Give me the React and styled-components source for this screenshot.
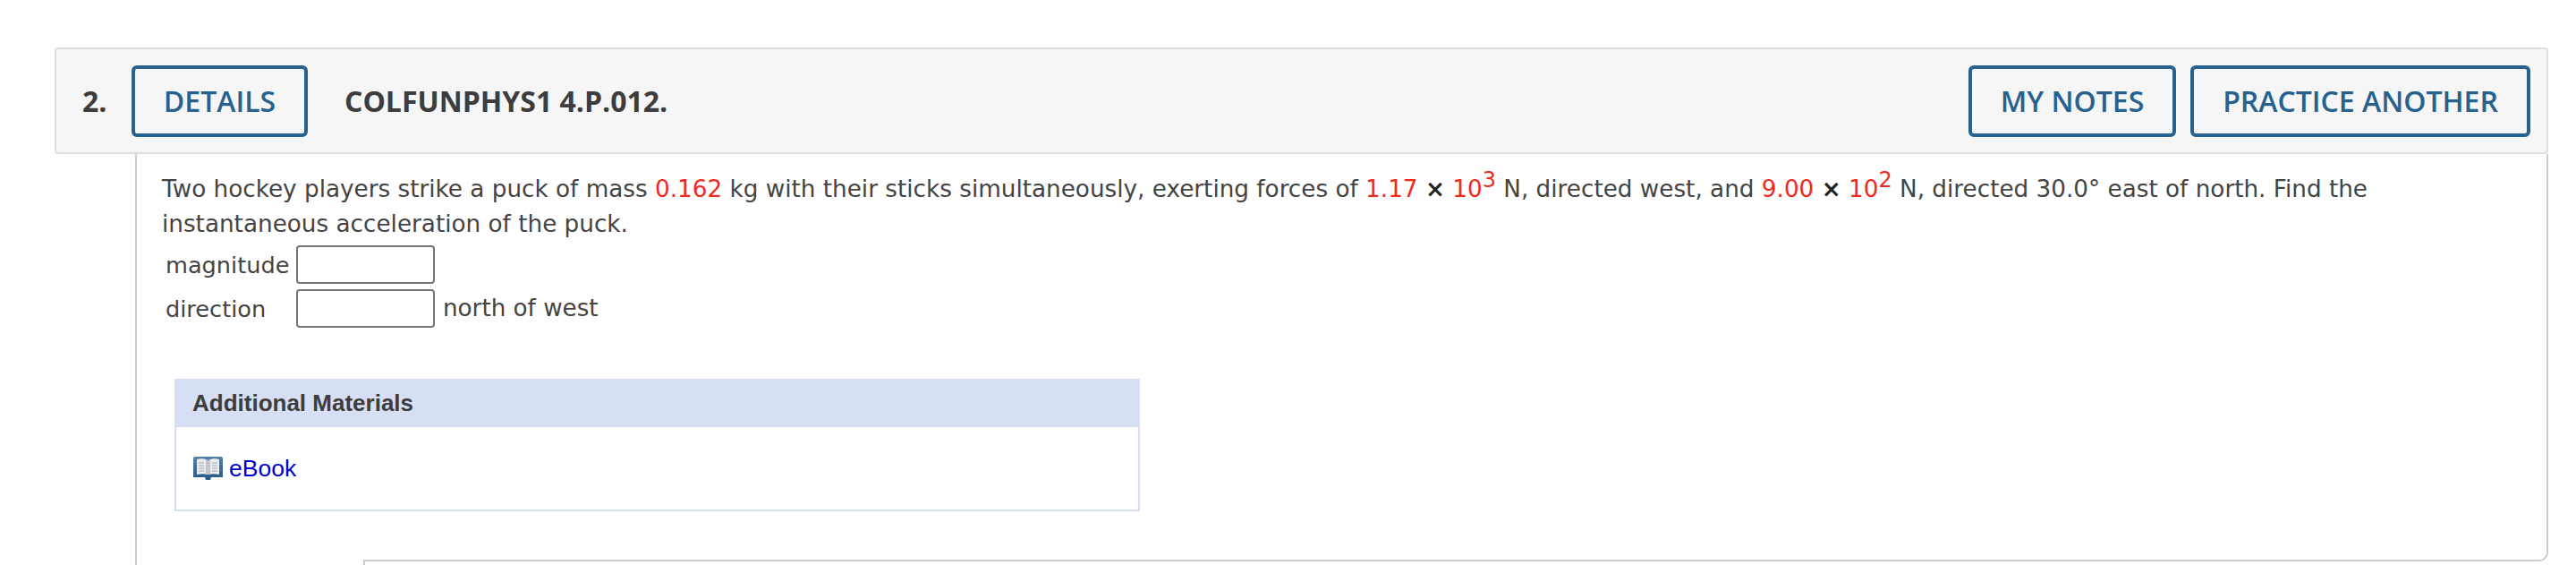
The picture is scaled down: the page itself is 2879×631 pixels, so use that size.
import styled, { createGlobalStyle } from "styled-components";

const GlobalStyle = createGlobalStyle`
html, body {
    margin: 0;
    background: #fff;
    height: 100%;
}
* {
    box-sizing: border-box;
}
`
const Page = styled.div`
width: 2879px;
height: 631px;
overflow: hidden;
padding: 53px 31px 0 61px;
`
const Header = styled.div`
display: flex;
align-items: center;
height: 119px;
padding: 0 18px 0 29px;
background: #f6f6f6;
border: 2px solid #dedede;
border-radius: 4px;
`
const Number = styled.span`
font-family: "Open Sans", sans-serif;
font-weight: 700;
font-size: 32px;
color: #3d3d3d;
width: 55px;
`
const Title = styled.span`
font-family: "Open Sans", sans-serif;
font-weight: 700;
font-size: 32px;
color: #3d3d3d;
margin-left: 41px;
flex: 1;
`
const OutlineButton = styled.button`
height: 80px;
width: ${(p) => p.$width}px;
margin-left: ${(p) => p.$gap || 0}px;
padding: 0;
background: transparent;
border: 4px solid #26618f;
border-radius: 6px;
color: #26618f;
font-family: "Open Sans", sans-serif;
font-weight: 600;
font-size: 32px;
`
const Body = styled.div`
height: 459px;
margin-left: 90px;
padding: 20px 0 0 28px;
border-left: 2px solid #cccccc;
position: relative;
`
const Question = styled.p`
margin: 0;
width: 2600px;
font-family: "DejaVu Sans", Verdana, sans-serif;
font-size: 26.25px;
line-height: 39px;
color: #444444;
`
const Red = styled.span`
color: #f0291f;
`
const Times = styled.span`
color: #222;
font-weight: 700;
`
const Sup = styled.sup`
color: #f0291f;
font-size: 24px;
line-height: 0;
vertical-align: 11px;
`
const AnswerGrid = styled.div`
display: grid;
grid-template-columns: 146px 155px auto;
grid-auto-rows: 43px;
row-gap: 6px;
justify-content: start;
align-items: center;
margin: 4px 0 0 4px;
font-family: "DejaVu Sans", Verdana, sans-serif;
font-size: 25.6px;
color: #444444;
`
const AnswerInput = styled.input`
width: 155px;
height: 43px;
background: #fff;
border: 2px solid #757575;
border-radius: 4px;
`
const Unit = styled.span`
margin-left: 9px;
margin-top: -2px;
font-size: 26.2px;
`
const Materials = styled.div`
width: 1079px;
height: 148px;
margin: 57px 0 0 14px;
border: 2px solid #d6dff3;
border-top: none;
`
const MaterialsHeader = styled.div`
display: flex;
align-items: center;
height: 54px;
margin: 0 -2px;
padding-left: 20px;
background: #d6dff3;
font-family: "Liberation Sans", Arial, sans-serif;
font-weight: 700;
font-size: 26px;
color: #3d3d3d;
`
const MaterialLink = styled.a`
display: flex;
align-items: center;
gap: 7px;
margin: 31px 0 0 19px;
font-family: "Liberation Sans", Arial, sans-serif;
font-size: 26.5px;
color: #0000cc;
text-decoration: none;
`
const NextPanel = styled.div`
position: absolute;
left: 253px;
right: 0;
top: 0;
bottom: 4px;
border-right: 2px solid #cccccc;
border-bottom: 2px solid #cccccc;
border-bottom-right-radius: 10px;
pointer-events: none;
&::after {
    content: "";
    position: absolute;
    left: 0;
    top: 100%;
    width: 2px;
    height: 6px;
    background: #cccccc;
}
`

function BookIcon() {
    return (
        <svg width="33" height="27" viewBox="0 0 33 27">
            <defs>
                <linearGradient id="cover" x1="0" y1="0" x2="0" y2="1">
                    <stop offset="0" stopColor="#5582aa" />
                    <stop offset="1" stopColor="#265885" />
                </linearGradient>
            </defs>
            <path d="M2 0h29a2 2 0 0 1 2 2v21H20l-1 3h-5l-1-3H0V2a2 2 0 0 1 2-2z" fill="url(#cover)" />
            <path d="M4 3c4-1 9-1 12 1v16c-3-1-8-1-12 0z" fill="#e9ecef" />
            <path d="M29 3c-4-1-9-1-12 1v16c3-1 8-1 12 0z" fill="#e9ecef" />
            <path d="M14 4h5v16h-5z" fill="#c2c6ca" />
            <path d="M6 7h6M6 10h6M6 13h6M6 16h6M21 7h6M21 10h6M21 13h6M21 16h6" stroke="#bcc2c8" strokeWidth="1.4" />
        </svg>
    )
}

export default function App() {
    return (
        <Page>
            <GlobalStyle />
            <Header>
                <Number>2.</Number>
                <OutlineButton $width={197}>DETAILS</OutlineButton>
                <Title>COLFUNPHYS1 4.P.012.</Title>
                <OutlineButton $width={232}>MY NOTES</OutlineButton>
                <OutlineButton $width={380} $gap={16}>PRACTICE ANOTHER</OutlineButton>
            </Header>
            <Body>
                <Question>
                    Two hockey players strike a puck of mass <Red>0.162</Red> kg with their sticks simultaneously, exerting forces of <Red>1.17</Red> <Times>×</Times> <Red>10</Red><Sup>3</Sup> N, directed west, and <Red>9.00</Red> <Times>×</Times> <Red>10</Red><Sup>2</Sup> N, directed 30.0° east of north. Find the instantaneous acceleration of the puck.
                </Question>
                <AnswerGrid>
                    <span>magnitude</span>
                    <AnswerInput />
                    <span />
                    <span>direction</span>
                    <AnswerInput />
                    <Unit>north of west</Unit>
                </AnswerGrid>
                <Materials>
                    <MaterialsHeader>Additional Materials</MaterialsHeader>
                    <MaterialLink href="#">
                        <BookIcon />
                        eBook
                    </MaterialLink>
                </Materials>
                <NextPanel />
            </Body>
        </Page>
    )
}
